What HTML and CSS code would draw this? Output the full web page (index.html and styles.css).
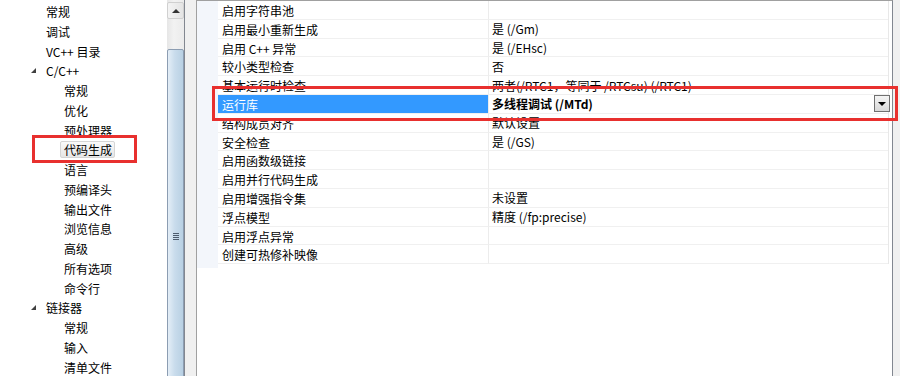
FILE: index.html
```html
<!DOCTYPE html>
<html>

<head>
  <title>属性页 - C/C++ 代码生成</title>
  <link rel="stylesheet" href="styles.css">
</head>

<body>
  <div class="window">
    <div class="tree-pane">
      <ul class="tree">
        <li class="lvl1">常规</li>
        <li class="lvl1">调试</li>
        <li class="lvl1">VC++ 目录</li>
        <li class="lvl1 open"><span class="arrow"></span>C/C++</li>
        <li class="lvl2">常规</li>
        <li class="lvl2">优化</li>
        <li class="lvl2">预处理器</li>
        <li class="lvl2"><span class="selected">代码生成</span></li>
        <li class="lvl2">语言</li>
        <li class="lvl2">预编译头</li>
        <li class="lvl2">输出文件</li>
        <li class="lvl2">浏览信息</li>
        <li class="lvl2">高级</li>
        <li class="lvl2">所有选项</li>
        <li class="lvl2">命令行</li>
        <li class="lvl1 open"><span class="arrow"></span>链接器</li>
        <li class="lvl2">常规</li>
        <li class="lvl2">输入</li>
        <li class="lvl2">清单文件</li>
      </ul>
      <div class="vscroll">
        <div class="scroll-btn"><span class="up"></span></div>
        <div class="scroll-gap"></div>
        <div class="thumb"><span class="grip"></span></div>
      </div>
    </div>

    <div class="split"></div>

    <div class="grid-pane">
      <div class="grid">
        <div class="row"><div class="gutter"></div><div class="name">启用字符串池</div><div class="value"></div></div>
        <div class="row"><div class="gutter"></div><div class="name">启用最小重新生成</div><div class="value">是 (/Gm)</div></div>
        <div class="row"><div class="gutter"></div><div class="name">启用 C++ 异常</div><div class="value">是 (/EHsc)</div></div>
        <div class="row"><div class="gutter"></div><div class="name">较小类型检查</div><div class="value">否</div></div>
        <div class="row"><div class="gutter"></div><div class="name">基本运行时检查</div><div class="value">两者(/RTC1，等同于 /RTCsu) (/RTC1)</div></div>
        <div class="row active">
          <div class="gutter"></div>
          <div class="name">运行库</div>
          <div class="value"><span class="bold">多线程调试 (/MTd)</span><span class="drop"><span class="down"></span></span></div>
        </div>
        <div class="row"><div class="gutter"></div><div class="name">结构成员对齐</div><div class="value">默认设置</div></div>
        <div class="row"><div class="gutter"></div><div class="name">安全检查</div><div class="value">是 (/GS)</div></div>
        <div class="row"><div class="gutter"></div><div class="name">启用函数级链接</div><div class="value"></div></div>
        <div class="row"><div class="gutter"></div><div class="name">启用并行代码生成</div><div class="value"></div></div>
        <div class="row"><div class="gutter"></div><div class="name">启用增强指令集</div><div class="value">未设置</div></div>
        <div class="row"><div class="gutter"></div><div class="name">浮点模型</div><div class="value">精度 (/fp:precise)</div></div>
        <div class="row"><div class="gutter"></div><div class="name">启用浮点异常</div><div class="value"></div></div>
        <div class="row"><div class="gutter"></div><div class="name">创建可热修补映像</div><div class="value"></div></div>
      </div>
      <div class="gutter-tail"></div>
    </div>

    <div class="edge"></div>

    <!-- red marks drawn over the screenshot -->
    <div class="mark mark-tree"></div>
    <div class="mark mark-grid"></div>
  </div>
</body>

</html>
```

FILE: styles.css
```css
body {
  margin: 0;
  background-color: #f0f0f0;
  font-family: "Noto Sans CJK SC", "Microsoft YaHei", sans-serif;
  font-size: 12px;
  color: #000;
}

.window {
  position: relative;
  display: flex;
  width: 900px;
  height: 376px;
  overflow: hidden;
}

/* left tree */
.tree-pane {
  display: flex;
  width: 184px;
  height: 376px;
  background: #fff;
  border-right: 1px solid #828790;
}

.tree {
  list-style: none;
  margin: 0;
  padding: 2px 0 0 0;
  width: 167px;
}

.tree li {
  position: relative;
  height: 19.78px;
  line-height: 19.78px;
  white-space: nowrap;
}

.lvl1 {
  padding-left: 46px;
}

.lvl2 {
  padding-left: 64px;
}

.arrow {
  position: absolute;
  left: 31px;
  top: 7px;
  width: 0;
  height: 0;
  border-left: 5px solid transparent;
  border-bottom: 5px solid #404040;
}

.selected {
  display: inline-block;
  height: 15px;
  line-height: 15px;
  margin-left: -4px;
  padding: 0 2px 0 3px;
  border: 1px solid #d5d5d5;
  border-radius: 2px;
  background: linear-gradient(#fafafa, #e6e6e6);
}

.vscroll {
  display: flex;
  flex-direction: column;
  width: 17px;
  background: linear-gradient(90deg, #e6e6e6, #f2f2f2 40%, #ebebeb);
}

.scroll-btn {
  display: flex;
  align-items: center;
  justify-content: center;
  height: 15px;
  margin-top: 2px;
  border: 1px solid #d0d0d0;
  border-radius: 2px;
  background: linear-gradient(90deg, #f4f4f4, #e4e4e4);
}

.up {
  width: 0;
  height: 0;
  border-left: 4px solid transparent;
  border-right: 4px solid transparent;
  border-bottom: 4px solid #333;
}

.scroll-gap {
  height: 30px;
}

.thumb {
  flex: 1;
  display: flex;
  align-items: flex-start;
  justify-content: center;
  margin-bottom: -10px;
  border: 1px solid #8c9db2;
  border-radius: 2px;
  background: linear-gradient(90deg, #e4eef7, #c9dcec 45%, #b8d0e3);
}

.grip {
  margin-top: 183px;
  width: 6px;
  height: 7px;
  background: repeating-linear-gradient(#4d5c6e 0, #4d5c6e 1px, transparent 1px, transparent 2px);
}

.split {
  width: 11px;
  background: #f0f0f0;
}

/* property grid */
.grid-pane {
  width: 695px;
  height: 375px;
  background: #fff;
  border-top: 1px solid #a0a0a0;
  border-left: 1px solid #a0a0a0;
  border-right: 1px solid #828790;
}

.grid {
  display: flex;
  flex-direction: column;
  border-right: 1px solid #e8e8e8;
  margin-right: 3px;
}

.row {
  display: flex;
  height: 18.8px;
  line-height: 19px;
}

.gutter {
  width: 21px;
  background: #f3f6fb;
}

.gutter-tail {
  width: 21px;
  height: 4px;
  background: #f3f6fb;
}

.name {
  width: 266px;
  padding-left: 4px;
  border-bottom: 1px solid #f0f0f0;
  white-space: nowrap;
}

.value {
  flex: 1;
  display: flex;
  align-items: center;
  padding-left: 3px;
  border-left: 1px solid #ececec;
  border-bottom: 1px solid #f0f0f0;
  white-space: nowrap;
}

.active .name {
  background: #3399ff;
  color: #fff;
}

.bold {
  font-weight: bold;
  flex: 1;
}

.drop {
  display: flex;
  align-items: center;
  justify-content: center;
  width: 14px;
  height: 15px;
  margin-right: -2px;
  border: 1px solid #707070;
  background: linear-gradient(#f4f4f4, #d8d8d8);
}

.down {
  width: 0;
  height: 0;
  border-left: 4px solid transparent;
  border-right: 4px solid transparent;
  border-top: 4px solid #000;
}

.edge {
  flex: 1;
  background: #f0f0f0;
}

/* annotation boxes */
.mark {
  position: absolute;
  border: 3px solid #e8302e;
}

.mark-tree {
  left: 32px;
  top: 135px;
  width: 99px;
  height: 22px;
}

.mark-grid {
  left: 212px;
  top: 86px;
  width: 680px;
  height: 29px;
}
```
